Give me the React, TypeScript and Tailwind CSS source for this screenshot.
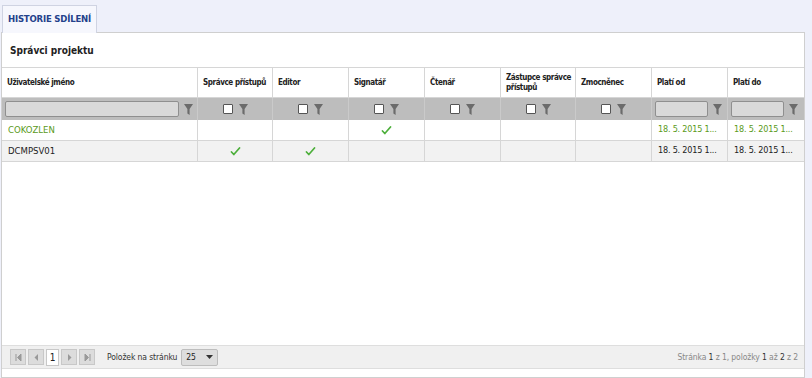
import type { ReactNode } from "react";

const COLS = [
  { label: "Uživatelské jméno", w: "w-[195px]", filter: "text" },
  { label: "Správce přístupů", w: "w-[75px]", filter: "check" },
  { label: "Editor", w: "w-[76px]", filter: "check" },
  { label: "Signatář", w: "w-[76px]", filter: "check" },
  { label: "Čtenář", w: "w-[76px]", filter: "check" },
  { label: "Zástupce správce|přístupů", w: "w-[75px]", filter: "check" },
  { label: "Zmocněnec", w: "w-[76px]", filter: "check" },
  { label: "Platí od", w: "w-[76px]", filter: "date" },
  { label: "Platí do", w: "w-[77px]", filter: "date" },
];

const ROWS = [
  { name: "COKOZLEN", checks: [false, false, true, false, false, false], from: "18. 5. 2015 1...", to: "18. 5. 2015 1...", green: true },
  { name: "DCMPSV01", checks: [true, true, false, false, false, false], from: "18. 5. 2015 1...", to: "18. 5. 2015 1...", green: false },
];

const FONT = "font-['DejaVu_Sans_Condensed','Liberation_Sans',sans-serif]";

function Funnel() {
  return (
    <svg width="9" height="11" viewBox="0 0 9 11" className="shrink-0">
      <path d="M0 0h9L5.6 5v6L3.4 9.5V5z" fill="#6b6b6b" />
    </svg>
  );
}

function Check() {
  return (
    <svg width="11" height="9" viewBox="0 0 11 9">
      <path d="M1.5 5l2.3 2.5 5.7-6.5" fill="none" stroke="#4caf3a" strokeWidth="1.7" strokeLinecap="round" strokeLinejoin="round" />
    </svg>
  );
}

function PagerBtn({ children }: { children: ReactNode }) {
  return (
    <div className="flex h-[16px] w-[16px] items-center justify-center border border-[#c8c8c8] bg-[#dcdcdc]">
      <svg width="7" height="7" viewBox="0 0 7 7">{children}</svg>
    </div>
  );
}

export default function App() {
  return (
    <div className={`h-[378px] w-[812px] bg-[#eef0fa] text-[#222] ${FONT}`}>
      <div className="flex h-[33px] items-end pl-[2px]">
        <div className="flex h-[28px] w-[95px] items-center justify-center whitespace-nowrap border border-b-0 border-[#cfd3e2] bg-[#f6f7fd] text-[9.5px] font-bold tracking-[-0.2px] text-[#23418b]">
          HISTORIE SDÍLENÍ
        </div>
      </div>
      <div className="-mt-px ml-px flex h-[346px] w-[804px] flex-col border border-[#cfcfcf] bg-white">
        <div className="flex h-[34px] items-center pl-[8px] text-[10px] font-bold">Správci projektu</div>
        {/* header */}
        <div className="flex h-[31px] border-y border-[#d6d6d6]">
          {COLS.map((c, i) => (
            <div
              key={c.label}
              className={`${c.w} flex flex-col justify-center overflow-hidden whitespace-nowrap px-[5px] text-[8px] leading-[10px] font-bold tracking-[-0.4px] ${i > 0 ? "border-l border-[#d6d6d6]" : ""}`}
            >
              {c.label.split("|").map((t) => (
                <span key={t}>{t}</span>
              ))}
            </div>
          ))}
        </div>
        {/* filter row */}
        <div className="flex h-[22px] bg-[#bdbdbd]">
          {COLS.map((c, i) => (
            <div
              key={c.label}
              className={`${c.w} flex items-center ${i > 0 ? "border-l border-[#cacaca]" : ""} ${c.filter === "check" ? "justify-center gap-[6px]" : "gap-[5px] pl-[3px]"}`}
            >
              {c.filter === "check" ? (
                <>
                  <div className="h-[10px] w-[10px] rounded-[1px] border border-[#555] bg-white" />
                  <Funnel />
                </>
              ) : (
                <>
                  <div className={`${c.filter === "text" ? "w-[174px]" : "w-[53px]"} h-[16px] rounded-[2px] border border-[#8f8f8f] bg-[#d9d9d9]`} />
                  <Funnel />
                </>
              )}
            </div>
          ))}
        </div>
        {ROWS.map((r, ri) => (
          <div key={r.name} className={`flex h-[21px] border-b border-[#d6d6d6] text-[9.5px] ${ri % 2 ? "bg-[#f2f2f2]" : "bg-white"}`}>
            <div className={`w-[195px] flex items-center px-[6px] ${r.green ? "text-[#5a9a1a]" : ""}`}>{r.name}</div>
            {r.checks.map((v, ci) => (
              <div key={ci} className={`${COLS[ci + 1].w} flex items-center justify-center border-l border-[#d6d6d6]`}>
                {v && <Check />}
              </div>
            ))}
            <div className={`w-[76px] flex items-center overflow-hidden whitespace-nowrap border-l border-[#d6d6d6] px-[6px] text-[9px] tracking-[-0.2px] ${r.green ? "text-[#5a9a1a]" : ""}`}>{r.from}</div>
            <div className={`w-[77px] flex items-center overflow-hidden whitespace-nowrap border-l border-[#d6d6d6] px-[6px] text-[9px] tracking-[-0.2px] ${r.green ? "text-[#5a9a1a]" : ""}`}>{r.to}</div>
          </div>
        ))}
        <div className="flex-1" />
        {/* footer */}
        <div className="flex h-[24px] items-center justify-between border-y border-[#dedede] bg-[#f0f0f0] pl-[8px] pr-[6px] text-[8.5px] tracking-[-0.1px]">
          <div className="flex items-center">
            <div className="flex items-center gap-[2px]">
              <PagerBtn><path d="M1 0v7M6 0L2.5 3.5 6 7z" stroke="#999" fill="#999" strokeWidth="1" /></PagerBtn>
              <PagerBtn><path d="M5 0L1.5 3.5 5 7z" fill="#999" /></PagerBtn>
              <div className="flex h-[17px] w-[13px] items-center justify-center border border-[#c8c8c8] bg-white text-[10px] text-[#222]">1</div>
              <PagerBtn><path d="M2 0l3.5 3.5L2 7z" fill="#999" /></PagerBtn>
              <PagerBtn><path d="M6 0v7M1 0l3.5 3.5L1 7z" stroke="#999" fill="#999" strokeWidth="1" /></PagerBtn>
            </div>
            <span className="ml-[12px] text-[#333]">Položek na stránku</span>
            <div className="ml-[4px] flex h-[17px] w-[37px] items-center justify-between rounded-[2px] border border-[#bdbdbd] bg-[#dedede] px-[4px] text-[#222]">
              <span>25</span>
              <svg width="7" height="4" viewBox="0 0 7 4"><path d="M0 0h7L3.5 4z" fill="#333" /></svg>
            </div>
          </div>
          <div className="text-[#888]">
            Stránka <span className="text-[#333]">1</span> z 1, položky <span className="text-[#333]">1</span> až <span className="text-[#333]">2</span> z 2
          </div>
        </div>
        <div className="h-[8px]" />
      </div>
    </div>
  );
}
